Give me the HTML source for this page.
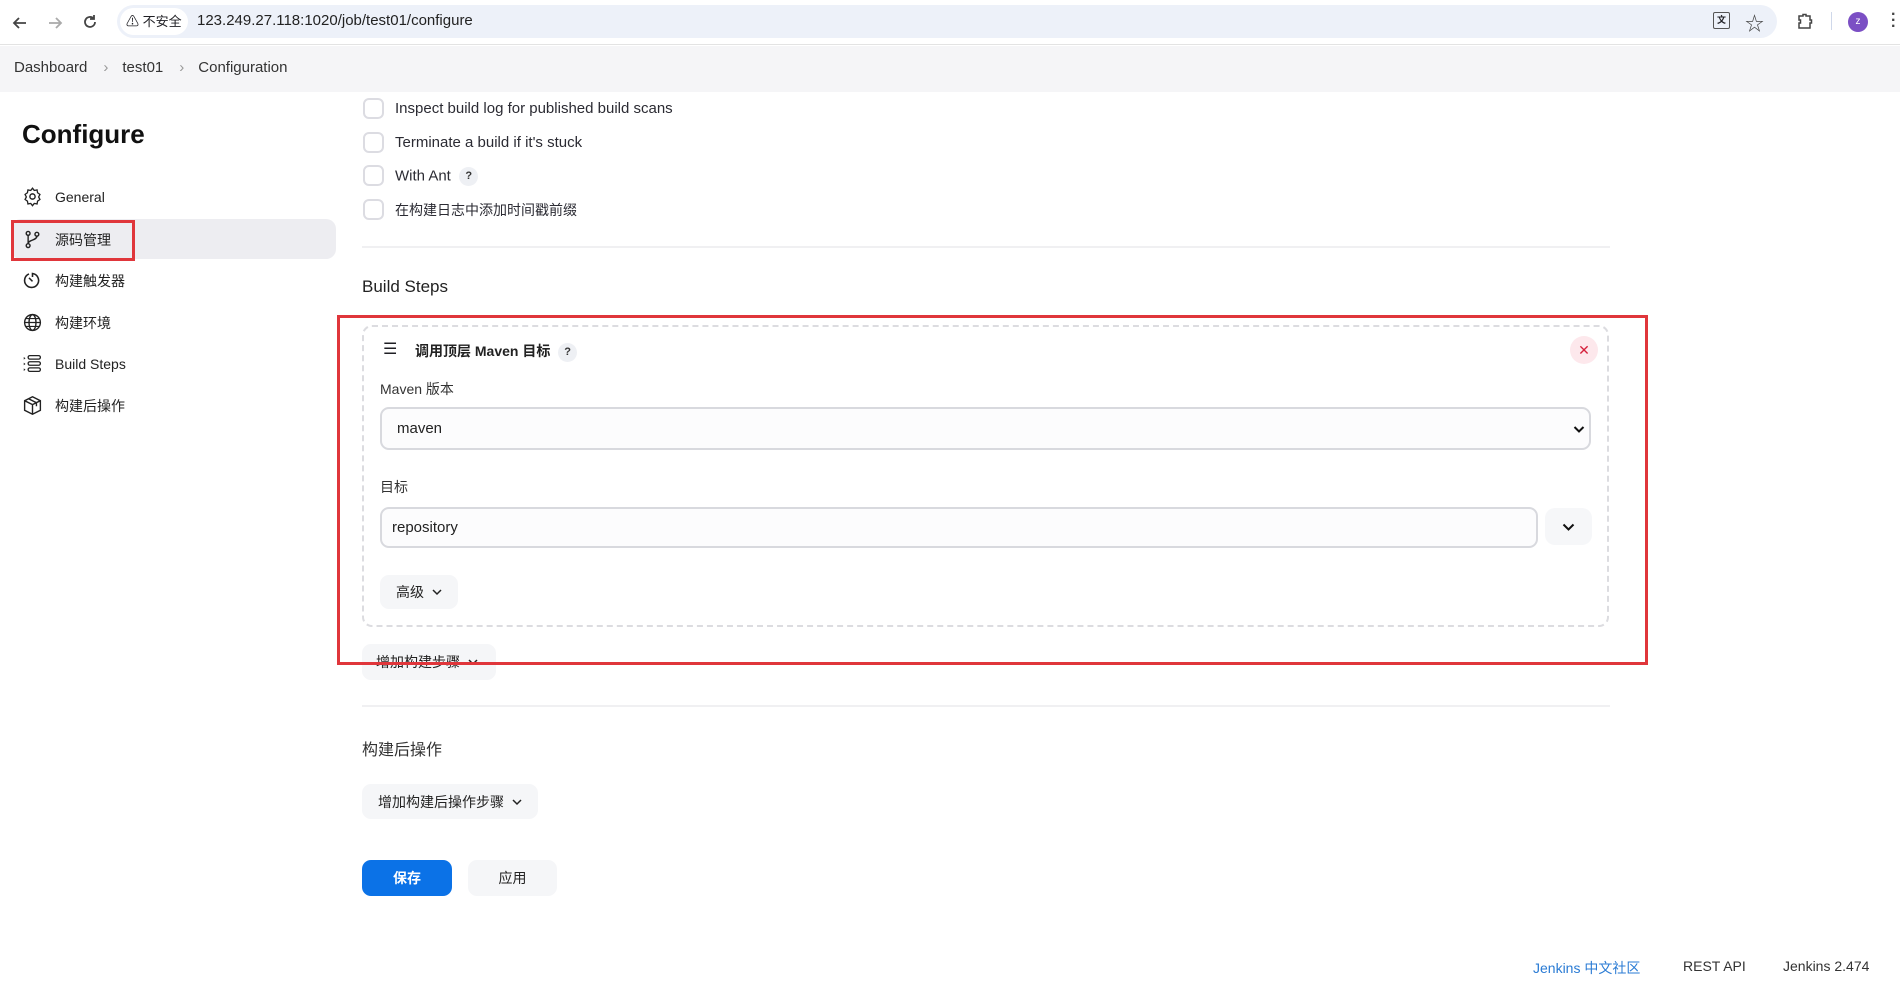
<!DOCTYPE html>
<html><head><meta charset="utf-8">
<style>
*{box-sizing:border-box;margin:0;padding:0}
body{width:1900px;height:988px;position:relative;overflow:hidden;background:#fff;font-family:"Liberation Sans","Noto Sans CJK SC",sans-serif;color:#1f1f24;font-size:15px}
.a{position:absolute;white-space:nowrap}
.cb{position:absolute;left:363px;width:21px;height:21px;border:2px solid #dcdce2;border-radius:6px;background:#fff}
.lbl{position:absolute;left:395px;font-size:15px;color:#2b2b33;line-height:18px}
.q{display:inline-block;width:19px;height:19px;border-radius:50%;background:#eef0f4;font-size:11px;font-weight:bold;text-align:center;line-height:19px;color:#333;vertical-align:middle}
.nav{position:absolute;left:55px;font-size:14px;line-height:18px;color:#222}
.ic{position:absolute;left:22px;width:21px;height:21px}
.btn{position:absolute;background:#f5f6f8;border-radius:9px;font-size:14px;color:#222;display:flex;align-items:center;justify-content:center;gap:8px}
.chev{width:10px;height:8px}
</style></head><body>
<div class="a" style="left:0;top:0;width:1900px;height:45px;background:#fff;border-bottom:1px solid #e3e3e3"></div>
<svg class="a" style="left:10px;top:13px" width="20" height="20" viewBox="0 0 20 20"><path d="M16 10H4M9 5l-5 5 5 5" fill="none" stroke="#444" stroke-width="1.8"/></svg>
<svg class="a" style="left:45px;top:13px" width="20" height="20" viewBox="0 0 20 20"><path d="M4 10h12M11 5l5 5-5 5" fill="none" stroke="#aaa" stroke-width="1.8"/></svg>
<svg class="a" style="left:80px;top:12px" width="20" height="20" viewBox="0 0 20 20"><path d="M15 10a5 5 0 1 1-1.5-3.6M14 3v4h-4" fill="none" stroke="#444" stroke-width="1.8"/></svg>
<div class="a" style="left:117px;top:5px;width:1660px;height:33px;background:#edf1f9;border-radius:17px"></div>
<div class="a" style="left:120px;top:8px;width:68px;height:27px;background:#fff;border-radius:14px;font-size:13px;line-height:27px;padding-left:6px">⚠ 不安全</div>
<div class="a" style="left:197px;top:12px;font-size:15px;color:#222">123.249.27.118:1020/job/test01/configure</div>
<div class="a" style="left:1713px;top:12px;width:17px;height:17px;border:1.5px solid #555;border-radius:2px;font-size:9px;text-align:center;line-height:14px;font-weight:bold">文</div>
<div class="a" style="left:1745px;top:9px;font-size:19px;color:#444">☆</div>
<svg class="a" style="left:1796px;top:12px" width="18" height="18" viewBox="0 0 18 18"><path d="M3 4h4V2.5h3V4h4v4h1.5v3H14v5H3V11h1.5V8H3z" fill="none" stroke="#444" stroke-width="1.5"/></svg>
<div class="a" style="left:1831px;top:12px;width:1px;height:18px;background:#cfd8ea"></div>
<div class="a" style="left:1848px;top:12px;width:20px;height:20px;border-radius:50%;background:#7b4fc4;color:#fff;font-size:10px;text-align:center;line-height:20px">z</div>
<div class="a" style="left:1891px;top:12px;font-size:16px;font-weight:bold;line-height:6px;color:#444">·<br>·<br>·</div>
<div class="a" style="left:0;top:46px;width:1900px;height:46px;background:#f5f5f7"></div>
<div class="a" style="left:14px;top:59px;font-size:15px;color:#333">Dashboard<span style="color:#999;margin:0 14px 0 16px">›</span>test01<span style="color:#999;margin:0 14px 0 16px">›</span>Configuration</div>
<div class="a" style="left:22px;top:119px;font-size:26px;font-weight:bold;color:#111">Configure</div>
<div class="a" style="left:11px;top:219px;width:325px;height:40px;background:#ededf1;border-radius:10px"></div>
<div class="a" style="left:11px;top:220px;width:124px;height:41px;border:3px solid #e0363b"></div>
<svg class="ic" style="top:186px" viewBox="0 0 24 24"><circle cx="12" cy="12" r="3" fill="none" stroke="#222" stroke-width="1.6"/><path d="M12 2.5l2 2.6 3.2-.6.6 3.2 2.7 1.9-1.5 2.9 1.5 2.9-2.7 1.9-.6 3.2-3.2-.6-2 2.6-2-2.6-3.2.6-.6-3.2-2.7-1.9 1.5-2.9-1.5-2.9 2.7-1.9.6-3.2 3.2.6z" fill="none" stroke="#222" stroke-width="1.5"/></svg>
<div class="nav" style="top:188px">General</div>
<svg class="ic" style="top:229px" viewBox="0 0 24 24"><circle cx="7" cy="5" r="2.2" fill="none" stroke="#222" stroke-width="1.6"/><circle cx="7" cy="19" r="2.2" fill="none" stroke="#222" stroke-width="1.6"/><circle cx="17" cy="6" r="2.2" fill="none" stroke="#222" stroke-width="1.6"/><path d="M7 7.2v9.6M17 8.2c0 5-10 4-10 8.6" fill="none" stroke="#222" stroke-width="1.6"/></svg>
<div class="nav" style="top:231px">源码管理</div>
<svg class="ic" style="top:270px" viewBox="0 0 24 24"><path d="M8 4.5A8 8 0 1 0 12 4v4" fill="none" stroke="#222" stroke-width="1.8"/><path d="M8 9l4 4" stroke="#222" stroke-width="1.8"/></svg>
<div class="nav" style="top:272px">构建触发器</div>
<svg class="ic" style="top:312px" viewBox="0 0 24 24"><circle cx="12" cy="12" r="9" fill="none" stroke="#222" stroke-width="1.6"/><ellipse cx="12" cy="12" rx="4" ry="9" fill="none" stroke="#222" stroke-width="1.6"/><path d="M3 12h18M4.5 7.5h15M4.5 16.5h15" stroke="#222" stroke-width="1.4"/></svg>
<div class="nav" style="top:314px">构建环境</div>
<svg class="ic" style="top:353px" viewBox="0 0 24 24"><path d="M2 4.5l2 1.5-2 1.5zM2 11l2 1.5L2 14zM2 17.5l2 1.5-2 1.5z" fill="#222"/><rect x="7" y="3" width="14" height="4" rx="2" fill="none" stroke="#222" stroke-width="1.5"/><rect x="7" y="10" width="14" height="4" rx="2" fill="none" stroke="#222" stroke-width="1.5"/><rect x="7" y="17" width="14" height="4" rx="2" fill="none" stroke="#222" stroke-width="1.5"/></svg>
<div class="nav" style="top:355px">Build Steps</div>
<svg class="ic" style="top:395px" viewBox="0 0 24 24"><path d="M12 2l9 4.5v11L12 22l-9-4.5v-11z M3 6.5L12 11l9-4.5M12 11v11M7.5 4.3l9 4.5v4" fill="none" stroke="#222" stroke-width="1.6"/></svg>
<div class="nav" style="top:397px">构建后操作</div>
<div class="cb" style="top:98px"></div><div class="lbl" style="top:100px">Inspect build log for published build scans</div>
<div class="cb" style="top:132px"></div><div class="lbl" style="top:134px">Terminate a build if it's stuck</div>
<div class="cb" style="top:165px"></div><div class="lbl" style="top:167px">With Ant &nbsp;<span class="q">?</span></div>
<div class="cb" style="top:199px"></div><div class="lbl" style="top:201px;font-size:14px">在构建日志中添加时间戳前缀</div>
<div class="a" style="left:362px;top:246px;width:1248px;height:2px;background:#f0f0f2"></div>
<div class="a" style="left:362px;top:277px;font-size:17px;color:#222">Build Steps</div>
<div class="a" style="left:362px;top:325px;width:1247px;height:302px;border:2px dashed #dcdce0;border-radius:10px"></div>
<div class="a" style="left:383px;top:340px;font-size:16px;line-height:20px">☰</div>
<div class="a" style="left:415px;top:341px;font-size:14px;font-weight:bold;color:#222">调用顶层 Maven 目标 &nbsp;<span class="q">?</span></div>
<div class="a" style="left:1570px;top:336px;width:28px;height:28px;border-radius:50%;background:#fde8ec;color:#d5203b;text-align:center;line-height:28px;font-size:14px">✕</div>
<div class="a" style="left:380px;top:379px;font-size:14px;color:#333">Maven 版本</div>
<div class="a" style="left:380px;top:407px;width:1211px;height:43px;border:2px solid #d8d9de;border-radius:9px;background:#fcfcfd"></div>
<div class="a" style="left:397px;top:420px;font-size:15px;color:#222">maven</div>
<svg class="a" style="left:1573px;top:423px" width="12" height="12" viewBox="0 0 12 12"><path d="M1.5 4l4.5 4.5L10.5 4" fill="none" stroke="#111" stroke-width="2"/></svg>
<div class="a" style="left:380px;top:477px;font-size:14px;color:#333">目标</div>
<div class="a" style="left:380px;top:507px;width:1158px;height:41px;border:2px solid #d8d9de;border-radius:9px;background:#fcfcfd"></div>
<div class="a" style="left:392px;top:519px;font-size:15px;color:#222">repository</div>
<div class="a" style="left:1545px;top:508px;width:47px;height:37px;background:#f6f7f9;border-radius:10px"></div>
<svg class="a" style="left:1562px;top:521px" width="13" height="12" viewBox="0 0 13 12"><path d="M1.5 3.5l5 5 5-5" fill="none" stroke="#111" stroke-width="2"/></svg>
<div class="btn" style="left:380px;top:575px;width:78px;height:34px">高级 <svg class="chev" viewBox="0 0 10 8"><path d="M1 2l4 4 4-4" fill="none" stroke="#222" stroke-width="1.5"/></svg></div>
<div class="a" style="left:337px;top:315px;width:1311px;height:350px;border:3px solid #e0363b"></div>
<div class="btn" style="left:362px;top:644px;width:134px;height:36px;z-index:-1;justify-content:flex-start;padding-left:14px">增加构建步骤 <svg class="chev" viewBox="0 0 10 8"><path d="M1 2l4 4 4-4" fill="none" stroke="#222" stroke-width="1.5"/></svg></div>
<div class="a" style="left:362px;top:705px;width:1248px;height:2px;background:#f0f0f2"></div>
<div class="a" style="left:362px;top:736px;font-size:16px;color:#333">构建后操作</div>
<div class="btn" style="left:362px;top:784px;width:176px;height:35px">增加构建后操作步骤 <svg class="chev" viewBox="0 0 10 8"><path d="M1 2l4 4 4-4" fill="none" stroke="#222" stroke-width="1.5"/></svg></div>
<div class="btn" style="left:362px;top:860px;width:90px;height:36px;background:#0b72e7;color:#fff;font-weight:bold">保存</div>
<div class="btn" style="left:468px;top:860px;width:89px;height:36px">应用</div>
<div class="a" style="left:1533px;top:958px;font-size:14px;color:#2a7bd4">Jenkins 中文社区</div>
<div class="a" style="left:1683px;top:958px;font-size:14px;color:#333">REST API</div>
<div class="a" style="left:1783px;top:958px;font-size:14px;color:#333">Jenkins 2.474</div>
</body></html>
